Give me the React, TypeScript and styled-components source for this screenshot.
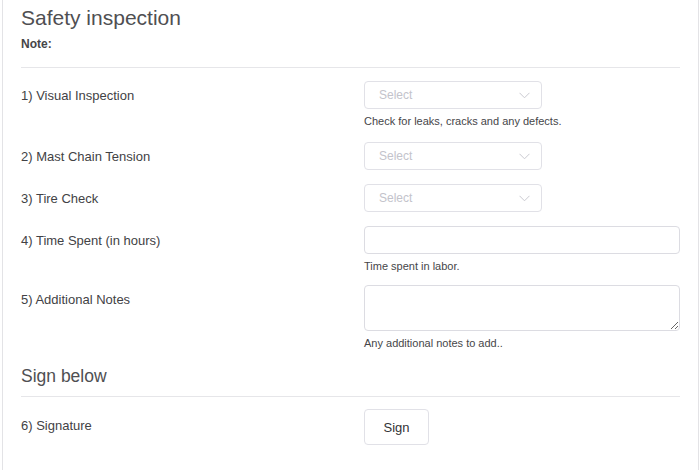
import React from "react";
import styled, { createGlobalStyle } from "styled-components";

const Global = createGlobalStyle`
  html, body { margin: 0; padding: 0; background: #fff; }
  body { font-family: "Liberation Sans", Arial, sans-serif; -webkit-font-smoothing: antialiased; }
  * { box-sizing: border-box; }
`;

const Card = styled.div`
  margin-left: 2px;
  width: 697px;
  min-height: 470px;
  border-left: 1px solid #e3e3e6;
  border-right: 1px solid #e3e3e6;
  padding: 4px 18px 20px 18px;
`;

const Title = styled.h2`
  margin: 0;
  font-size: 21px;
  line-height: 28px;
  font-weight: 400;
  color: #4f4f52;
`;

const SubTitle = styled.h3`
  margin: 0;
  font-size: 17.5px;
  line-height: 24px;
  font-weight: 400;
  color: #4f4f52;
`;

const Note = styled.div`
  margin-top: 4px;
  font-size: 12px;
  line-height: 16px;
  font-weight: 700;
  color: #454548;
`;

const Divider = styled.hr<{ $top: number }>`
  border: 0;
  height: 1px;
  background: #e6e6e9;
  margin: ${(p) => p.$top}px 0 0 0;
`;

const Row = styled.div<{ $mt?: number }>`
  display: grid;
  grid-template-columns: 343px 1fr;
  align-items: start;
  margin-top: ${(p) => p.$mt ?? 14}px;
`;

const Label = styled.div<{ $lh?: number }>`
  font-size: 13px;
  padding-top: 2px;
  line-height: ${(p) => p.$lh ?? 26}px;
  color: #424245;
`;

const Control = styled.div`
  display: flex;
  flex-direction: column;
  align-items: flex-start;
`;

const SelectBox = styled.div`
  width: 178px;
  height: 28px;
  border: 1px solid #e1e1e7;
  border-radius: 4px;
  display: flex;
  align-items: center;
  justify-content: space-between;
  padding: 0 11px 0 14px;
  font-size: 12px;
  color: #c3c3cb;
  background: #fff;
`;

const TextInput = styled.input`
  width: 100%;
  height: 28px;
  border: 1px solid #dcdce2;
  border-radius: 4px;
  outline: none;
  padding: 0 10px;
  font: inherit;
  background: #fff;
`;

const TextArea = styled.textarea`
  width: 100%;
  height: 46px;
  border: 1px solid #dcdce2;
  border-radius: 4px;
  outline: none;
  padding: 6px 10px;
  font: inherit;
  display: block;
  background: #fff;
`;

const Help = styled.div`
  margin-top: 5px;
  font-size: 11px;
  line-height: 14px;
  color: #464649;
`;

const SignSection = styled.div`
  margin-top: 14px;
`;

const SignButton = styled.button`
  width: 65px;
  height: 36px;
  border: 1px solid #e1e1e7;
  border-radius: 4px;
  background: #fff;
  font-family: inherit;
  font-size: 13px;
  font-weight: 500;
  color: #333336;
  padding: 0;
`;

const Chevron = () => (
  <svg width="11" height="7" viewBox="0 0 11 7" fill="none">
    <path d="M0.5 0.8 L5.5 5.8 L10.5 0.8" stroke="#c9c9d0" strokeWidth="1" />
  </svg>
);

const Select = () => (
  <SelectBox>
    <span>Select</span>
    <Chevron />
  </SelectBox>
);

export default function App() {
  return (
    <>
      <Global />
      <Card>
        <Title>Safety inspection</Title>
        <Note>Note:</Note>
        <Divider $top={15} />
        <Row $mt={13}>
          <Label>1) Visual Inspection</Label>
          <Control>
            <Select />
            <Help>Check for leaks, cracks and any defects.</Help>
          </Control>
        </Row>
        <Row>
          <Label>2) Mast Chain Tension</Label>
          <Control>
            <Select />
          </Control>
        </Row>
        <Row>
          <Label>3) Tire Check</Label>
          <Control>
            <Select />
          </Control>
        </Row>
        <Row>
          <Label>4) Time Spent (in hours)</Label>
          <Control>
            <TextInput />
            <Help>Time spent in labor.</Help>
          </Control>
        </Row>
        <Row $mt={12}>
          <Label>5) Additional Notes</Label>
          <Control>
            <TextArea />
            <Help>Any additional notes to add..</Help>
          </Control>
        </Row>
        <SignSection>
          <SubTitle>Sign below</SubTitle>
          <Divider $top={8} />
          <Row $mt={12}>
            <Label $lh={30}>6) Signature</Label>
            <Control>
              <SignButton>Sign</SignButton>
            </Control>
          </Row>
        </SignSection>
      </Card>
    </>
  );
}
